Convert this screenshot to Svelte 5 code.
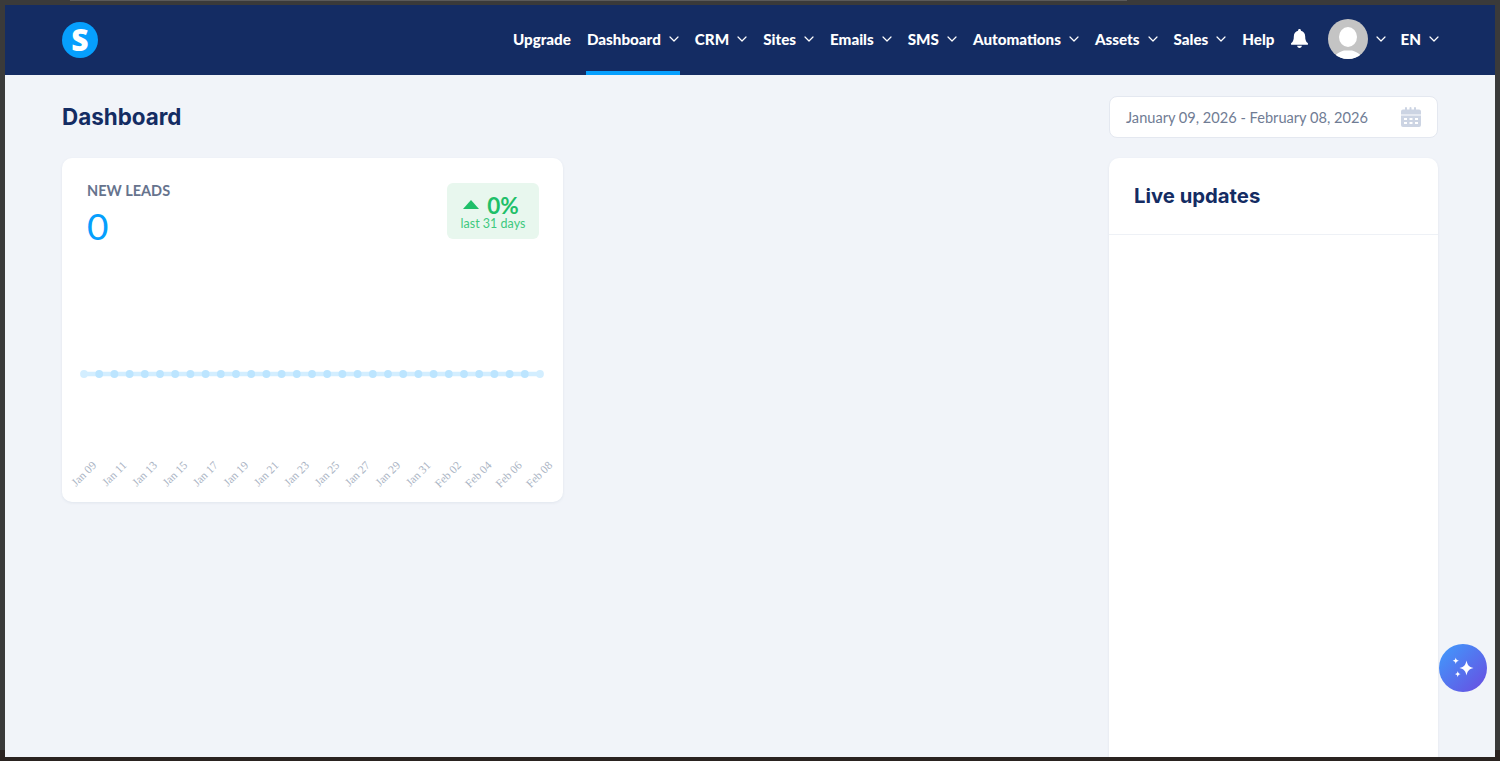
<script lang="ts">
	const NAV = [
		{ label: 'Upgrade', caret: false },
		{ label: 'Dashboard', caret: true, active: true },
		{ label: 'CRM', caret: true },
		{ label: 'Sites', caret: true },
		{ label: 'Emails', caret: true },
		{ label: 'SMS', caret: true },
		{ label: 'Automations', caret: true },
		{ label: 'Assets', caret: true },
		{ label: 'Sales', caret: true },
		{ label: 'Help', caret: false },
	];

	const LABELS = ['Jan 09', 'Jan 11', 'Jan 13', 'Jan 15', 'Jan 17', 'Jan 19', 'Jan 21', 'Jan 23', 'Jan 25', 'Jan 27', 'Jan 29', 'Jan 31', 'Feb 02', 'Feb 04', 'Feb 06', 'Feb 08'];

	// chart coordinates are relative to the card
	const STEP = 15.2;
	const START = 22;
	const points = Array.from({ length: 31 }, (_, i) => START + i * STEP);
</script>

{#snippet chevron()}
	<svg class="chevron" viewBox="0 0 10 6" fill="none" stroke="currentColor" stroke-width="1.2" stroke-linecap="round" stroke-linejoin="round">
		<path d="M1 1l4 4 4-4" />
	</svg>
{/snippet}

<div class="frame">
	<div class="topline"></div>
	<div class="window">
		<header class="topbar">
			<div class="logo">S</div>
			<nav class="nav">
				{#each NAV as item (item.label)}
					<a class="nav-item" class:active={item.active} href="#top">
						{item.label}
						{#if item.caret}{@render chevron()}{/if}
					</a>
				{/each}
				<svg class="bell" viewBox="0 0 18 20" fill="#fff">
					<path d="M9 0c-.9 0-1.5.6-1.5 1.4v.5C4.700 2.500 3 4.800 3 7.500c0 4-1 5.700-2.400 7.100-.5.500-.6.800-.6 1.100 0 .6.500 1 1.100 1h15.800c.6 0 1.100-.4 1.100-1 0-.3-.1-.6-.6-1.100C16 13.200 15 11.500 15 7.500c0-2.700-1.700-5-4.500-5.600v-.5C10.500.6 9.900 0 9 0z" />
					<path d="M6.500 17.800h5c0 1.300-1.100 2.200-2.500 2.200s-2.500-.9-2.500-2.200z" />
				</svg>
				<div class="user">
					<svg class="avatar" viewBox="0 0 40 40">
						<defs>
							<clipPath id="avatar-clip"><circle cx="20" cy="20" r="20" /></clipPath>
						</defs>
						<g clip-path="url(#avatar-clip)">
							<rect width="40" height="40" fill="#c4c4c4" />
							<ellipse cx="20" cy="18" rx="9" ry="10" fill="#fff" />
							<path d="M6 40c0-5 6-7 10-8.500h8C28 33 34 35 34 40z" fill="#fff" />
						</g>
					</svg>
					{@render chevron()}
				</div>
				<div class="lang">EN {@render chevron()}</div>
			</nav>
		</header>

		<main class="content">
			<div class="left">
				<h1 class="page-title">Dashboard</h1>
				<section class="card leads">
					<div class="leads-head">
						<div>
							<div class="leads-label">NEW LEADS</div>
							<div class="leads-value">0</div>
						</div>
						<div class="trend">
							<div class="trend-top">
								<svg class="trend-arrow" viewBox="0 0 16 9" fill="#1fbf69"><path d="M8 0l8 9H0z" /></svg>
								<span>0%</span>
							</div>
							<div class="trend-sub">last 31 days</div>
						</div>
					</div>
					<svg class="chart" viewBox="0 0 501 344" width="501" height="344">
						<line x1={START} x2={START + 30 * STEP} y1="216" y2="216" stroke="#d3eeff" stroke-width="4.500" />
						{#each points as x, i (i)}
							<circle cx={x} cy="216" r="3.900" fill={i === 0 || i === 30 ? '#d3eeff' : '#bce5ff'} />
						{/each}
						{#each LABELS as label, i (label)}
							<text class="tick" transform="translate({35 + i * 30.400} 308) rotate(-45)" text-anchor="end">{label}</text>
						{/each}
					</svg>
				</section>
			</div>

			<aside class="right">
				<div class="date-range">
					<span>January 09, 2026 - February 08, 2026</span>
					<svg class="calendar" viewBox="0 0 20 20" fill="#ccd4e3">
						<path d="M2 2.500h2V1a1 1 0 0 1 2 0v1.500h2.500V1a1 1 0 0 1 2 0v1.500H13V1a1 1 0 0 1 2 0v1.500h3A2 2 0 0 1 20 4.500v3H0v-3a2 2 0 0 1 2-2z" />
						<path fill-rule="evenodd" d="M0 8.500h20V18a2 2 0 0 1-2 2H2a2 2 0 0 1-2-2zM3 11v2h3v-2zm5.500 0v2h3v-2zM14 11v2h3v-2zM3 15v2h3v-2zm5.500 0v2h3v-2zm5.500 0v2h3v-2z" />
					</svg>
				</div>
				<section class="card live">
					<h2 class="live-title">Live updates</h2>
				</section>
			</aside>

			<button class="assistant" aria-label="Assistant">
				<svg viewBox="0 0 24 24" fill="#fff" width="28" height="28">
					<path d="M15 5.500c.8 3.700 1.800 5.400 6 6.500-4.200 1.100-5.200 2.800-6 6.500-.8-3.700-1.800-5.400-6-6.500 4.200-1.100 5.200-2.800 6-6.500z" />
					<path d="M5.800 3c.3 1.700.9 2.300 2.700 2.800C6.700 6.300 6.100 6.900 5.800 8.600 5.500 6.900 4.900 6.300 3.100 5.800 4.900 5.300 5.500 4.700 5.800 3z" />
					<path d="M7.500 14.500c.3 1.700.8 2.200 2.500 2.700-1.700.5-2.200 1-2.500 2.700-.3-1.700-.8-2.200-2.500-2.700 1.700-.5 2.200-1 2.500-2.700z" />
				</svg>
			</button>
		</main>
	</div>
</div>

<style>
	:global(body) {
		margin: 0;
		background: #333333;
	}

	.frame {
		position: relative;
		box-sizing: border-box;
		height: 761px;
		padding: 5px 5px 4px 5px;
		overflow: hidden;
		background: linear-gradient(#3a3a3a 0 750px, #2a2320 750px);
		font-family: Lato, 'Liberation Sans', sans-serif;
	}

	.topline {
		position: absolute;
		top: 0;
		left: 70px;
		width: 1057px;
		height: 1px;
		background: #5a5a5a;
	}

	.window {
		height: 100%;
		display: flex;
		flex-direction: column;
		background: #f1f4f9;
		overflow: hidden;
	}

	/* Top bar */
	.topbar {
		flex: none;
		box-sizing: border-box;
		height: 70px;
		display: flex;
		align-items: center;
		justify-content: space-between;
		padding: 0 56px 0 57px;
		background: #142c63;
		color: #fff;
	}

	.logo {
		width: 36px;
		height: 36px;
		border-radius: 50%;
		background: #069ffd;
		color: #fff;
		display: flex;
		align-items: center;
		justify-content: center;
		font-family: 'Open Sans', sans-serif;
		font-size: 30px;
		font-weight: 800;
		line-height: 1;
	}

	.nav {
		display: flex;
		align-items: center;
		gap: 16px;
		height: 100%;
	}

	.nav-item {
		box-sizing: border-box;
		height: 100%;
		display: flex;
		align-items: center;
		gap: 8px;
		padding-bottom: 3px;
		color: #fff;
		text-decoration: none;
		font-size: 15.2px;
		font-weight: 900;
		position: relative;
		white-space: nowrap;
	}

	.nav-item.active::after {
		content: '';
		position: absolute;
		left: -1px;
		right: -1px;
		bottom: 0;
		height: 4px;
		background: #069ffd;
	}

	.chevron {
		width: 10px;
		height: 6px;
		flex: none;
		color: #fff;
	}

	.bell {
		width: 17px;
		height: 19px;
		margin-top: -3px;
	}

	.user {
		display: flex;
		align-items: center;
		gap: 8px;
		margin-left: 4px;
		margin-top: -3px;
	}

	.avatar {
		width: 40px;
		height: 40px;
		display: block;
	}

	.lang {
		display: flex;
		align-items: center;
		gap: 8px;
		margin-left: -1px;
		padding-bottom: 3px;
		font-size: 15.2px;
		font-weight: 900;
	}

	/* Content */
	.content {
		position: relative;
		flex: 1;
		min-height: 0;
		display: flex;
		justify-content: space-between;
		padding: 21px 57px 0;
	}

	.left {
		width: 501px;
	}

	.page-title {
		margin: 0;
		height: 62px;
		padding-top: 6px;
		box-sizing: border-box;
		font-family: Inter, sans-serif;
		font-size: 22.4px;
		font-weight: 700;
		line-height: 30px;
		color: #142c63;
	}

	.card {
		background: #fff;
		border-radius: 10px;
		box-shadow: 0 1px 3px rgba(40, 60, 100, 0.08);
	}

	.leads {
		position: relative;
		box-sizing: border-box;
		height: 344px;
	}

	.leads-head {
		position: relative;
		z-index: 1;
		display: flex;
		justify-content: space-between;
		align-items: flex-start;
		padding: 25px 24px 0 25px;
	}

	.leads-label {
		margin-top: -1px;
		font-size: 14.5px;
		font-weight: 700;
		line-height: 17px;
		color: #66738d;
	}

	.leads-value {
		margin-top: 5px;
		font-size: 37px;
		line-height: 44px;
		color: #069ffd;
	}

	.trend {
		box-sizing: border-box;
		width: 92px;
		height: 56px;
		border-radius: 6px;
		background: #e8f7ee;
		color: #1fbf69;
		text-align: center;
		padding-top: 12px;
	}

	.trend-top {
		display: flex;
		align-items: center;
		justify-content: center;
		gap: 8px;
		font-size: 22.5px;
		font-weight: 700;
		line-height: 22px;
		margin-left: -4px;
	}

	.trend-arrow {
		width: 16px;
		height: 9px;
		margin-top: -4px;
	}

	.trend-sub {
		font-size: 12.5px;
		line-height: 14px;
		color: #3ec97e;
	}

	.chart {
		position: absolute;
		top: 0;
		left: 0;
	}

	.tick {
		font-family: 'Liberation Serif', serif;
		font-size: 11.5px;
		fill: #a9b3c3;
	}

	.right {
		width: 329px;
		display: flex;
		flex-direction: column;
		gap: 20px;
	}

	.date-range {
		box-sizing: border-box;
		height: 42px;
		flex: none;
		display: flex;
		align-items: center;
		justify-content: space-between;
		padding: 0 16px;
		background: #fff;
		border: 1px solid #e4e8f0;
		border-radius: 8px;
		font-size: 14.6px;
		color: #707c94;
	}

	.calendar {
		width: 20px;
		height: 20px;
	}

	.live {
		flex: 1;
		border-radius: 10px 10px 0 0;
	}

	.live-title {
		box-sizing: border-box;
		height: 77px;
		margin: 0;
		padding: 0 25px 2px;
		display: flex;
		align-items: center;
		border-bottom: 1px solid #eef1f6;
		font-family: Inter, sans-serif;
		font-size: 20.3px;
		font-weight: 700;
		color: #142c63;
	}

	.assistant {
		position: absolute;
		right: 8px;
		top: 569px;
		width: 48px;
		height: 48px;
		padding: 0;
		border: none;
		border-radius: 50%;
		display: flex;
		align-items: center;
		justify-content: center;
		background: linear-gradient(135deg, #3f9dfd, #6a4be0);
	}
</style>
